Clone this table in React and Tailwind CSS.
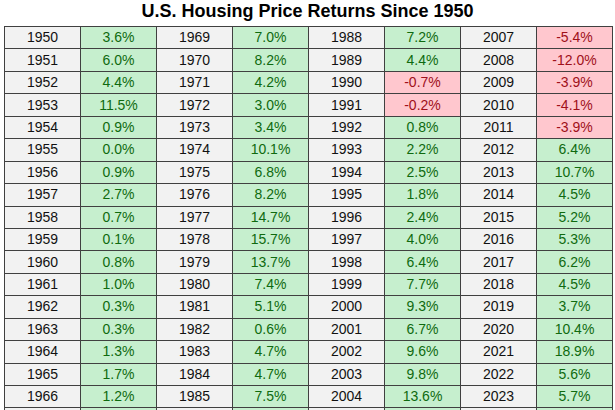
import React from "react";

const COLS = [
  { start: 1950, vals: ["3.6", "6.0", "4.4", "11.5", "0.9", "0.0", "0.9", "2.7", "0.7", "0.1", "0.8", "1.0", "0.3", "0.3", "1.3", "1.7", "1.2", "2.6"] },
  { start: 1969, vals: ["7.0", "8.2", "4.2", "3.0", "3.4", "10.1", "6.8", "8.2", "14.7", "15.7", "13.7", "7.4", "5.1", "0.6", "4.7", "4.7", "7.5", "8.0"] },
  { start: 1988, vals: ["7.2", "4.4", "-0.7", "-0.2", "0.8", "2.2", "2.5", "1.8", "2.4", "4.0", "6.4", "7.7", "9.3", "6.7", "9.6", "9.8", "13.6", "13.5"] },
  { start: 2007, vals: ["-5.4", "-12.0", "-3.9", "-4.1", "-3.9", "6.4", "10.7", "4.5", "5.2", "5.3", "6.2", "4.5", "3.7", "10.4", "18.9", "5.6", "5.7", "5.0"] },
];

// last row only peeks in under the bottom edge, so it carries no text
const VISIBLE = 17;
const ROWS = COLS[0].vals.map((_, i) => i);

export default function App() {
  return (
    <div className="w-[615px] h-[410px] overflow-hidden bg-white font-['Liberation_Sans',Arial,sans-serif]">
      <div className="h-[26px] pt-[2px] text-center text-[18px] leading-[18px] font-bold text-black">
        U.S. Housing Price Returns Since 1950
      </div>
      <div className="ml-[4px] w-[609px] grid grid-cols-8 gap-px bg-[#404040] p-px">
        {ROWS.map((r) =>
          COLS.map((c) => {
            const v = c.vals[r];
            const neg = v.startsWith("-");
            const show = r < VISIBLE;
            return (
              <React.Fragment key={c.start + r}>
                <div className="h-[21.45px] flex items-center justify-center bg-[#f2f2f2] text-[14px] text-[#111]">
                  {show ? c.start + r : ""}
                </div>
                <div
                  className={
                    neg
                      ? "h-[21.45px] flex items-center justify-center bg-[#ffc7ce] text-[14px] text-[#a0101a]"
                      : "h-[21.45px] flex items-center justify-center bg-[#c6efce] text-[14px] text-[#0f6a0f]"
                  }
                >
                  {show ? v + "%" : ""}
                </div>
              </React.Fragment>
            );
          })
        )}
      </div>
    </div>
  );
}
